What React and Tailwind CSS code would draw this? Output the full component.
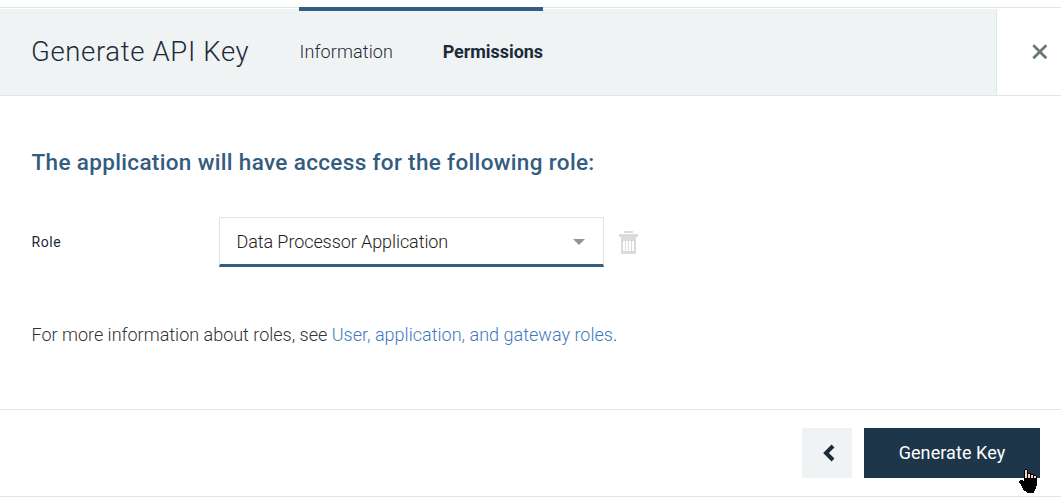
import React from "react";

function CloseIcon() {
  return (
    <svg width="16" height="16" viewBox="0 0 16 16" fill="none" stroke="#6b7676" strokeWidth="2.7">
      <path d="M1.3 1.3 14.3 14.3M14.3 1.3 1.3 14.3" />
    </svg>
  );
}

function TrashIcon() {
  return (
    <svg width="20" height="24" viewBox="0 0 20 24" fill="#d8dcdc" shapeRendering="crispEdges">
      <rect x="5" y="0" width="9" height="2" />
      <rect x="0" y="3" width="19" height="3" />
      <path fillRule="evenodd" d="M2 6H17V23H2ZM4 10V20H15V10Z" />
      <rect x="6" y="10" width="1" height="10" />
      <rect x="9" y="10" width="1" height="10" />
      <rect x="12" y="10" width="1" height="10" />
    </svg>
  );
}

function HandCursor() {
  return (
    <svg width="19" height="25" viewBox="0 0 19 25" shapeRendering="crispEdges">
      <path
        fill="#000"
        d="M6 0H8V1H9V4H12V5H15V6H17V7H18V17H17V20H16V22H15V24H8V23H7V22H5V21H4V19H3V17H2V15H1V14H0V12H1V11H4V12H5V1H6Z"
      />
      <path fill="#f4d3c0" d="M6 1H8V9H6ZM9 5H11V9H9ZM12 6H14V9H12ZM15 7H17V9H15Z" />
    </svg>
  );
}

export default function App() {
  return (
    <div className="flex h-[498px] w-[1061px] flex-col overflow-hidden bg-white pt-[7px] font-['Roboto','Liberation_Sans',sans-serif] whitespace-nowrap">
      <header className="flex h-[89px] border-y border-[#dfe8e8] pt-px">
        <div className="flex w-[997px] border-r border-[#dfe8e8] bg-[#eff3f4] pl-[31px] text-[#1d2a38]">
          <h1 className="w-[268px] pt-[25px] text-[27.5px] leading-9 font-[350] tracking-[0.65px]">Generate API Key</h1>
          <nav className="relative flex w-[244px] justify-between pt-[31px] text-[18px] leading-6">
            <span className="absolute top-[-2px] left-0 h-1 w-[244px] bg-[#325c80]" />
            <span className="pl-[0.5px] font-[350] tracking-[0.12px]">Information</span>
            <span className="font-bold tracking-[-0.05px]">Permissions</span>
          </nav>
        </div>
        <button className="flex flex-1 items-center justify-center pl-[22px]">
          <CloseIcon />
        </button>
      </header>

      <main className="flex h-[313px] flex-col pl-[31.5px]">
        <h2 className="mt-[50px] text-[22.5px] leading-8 font-medium tracking-[0.34px] text-[#325c80]">
          The application will have access for the following role:
        </h2>
        <div className="mt-[39px] flex h-[50px] items-center">
          <label className="w-[187.5px] text-[14px] tracking-[0.6px] text-[#1d2a38]">Role</label>
          <div className="flex h-[50px] w-[385px] items-center justify-between border border-b-[3px] border-[#dfe8e8] border-b-[#325c80] pr-[18px] pl-[16.5px] text-[18px] font-[350] text-[#222]">
            <span className="tracking-[-0.08px]">Data Processor Application</span>
            <svg className="mt-[2px]" width="12" height="6" viewBox="0 0 12 6" fill="#949494">
              <path d="M0 0H12L6 6Z" />
            </svg>
          </div>
          <div className="mt-[2px] ml-[15px]">
            <TrashIcon />
          </div>
        </div>
        <p className="mt-[56px] text-[18px] leading-6 font-[350] text-[#323232]">
          <span>For more information about roles, see </span>
          <a className="tracking-[0.02px] text-[#4178be]">User, application, and gateway roles</a>.
        </p>
      </main>

      <footer className="flex h-[88px] justify-end gap-3 border-y border-[#dfe8e8] pt-[18px] pr-[21px]">
        <button className="flex h-[50px] w-[50px] items-center justify-center bg-[#eff3f4] pl-[3px]">
          <svg width="12" height="18" viewBox="0 0 12 18" fill="none" stroke="#1d2a38" strokeWidth="4">
            <path d="M10 2 3 9 10 16" />
          </svg>
        </button>
        <button className="relative flex h-[50px] w-[176px] items-center justify-center bg-[#1d3649] pb-[2px] text-[18px] text-white">
          <span className="tracking-[0.08px]">Generate Key</span>
          <span className="absolute top-[41px] left-[155px]">
            <HandCursor />
          </span>
        </button>
      </footer>
    </div>
  );
}
